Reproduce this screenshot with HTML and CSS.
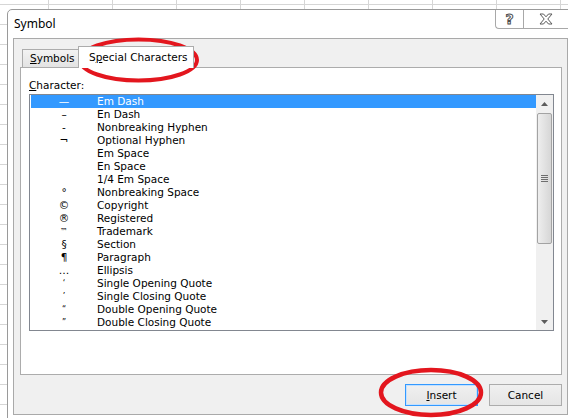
FILE: index.html
```html
<!DOCTYPE html>
<html>
<head>
<meta charset="utf-8">
<title>Symbol</title>
<link rel="stylesheet" href="styles.css">
</head>
<body>
<div class="window">
  <div class="titlebar">
    <div class="title">Symbol</div>
    <div class="caption-btns">
      <div class="cbtn help"><span class="q">?</span></div>
      <div class="cbtn close">
        <svg width="14" height="12" viewBox="0 0 14 12"><polygon points="1,1 4.5,1 7,3.8 9.5,1 13,1 8.8,6 13,11 9.5,11 7,8.2 4.5,11 1,11 5.2,6" fill="#fff" stroke="#5a5a5a" stroke-width="1" stroke-linejoin="round"/></svg>
      </div>
    </div>
  </div>
  <div class="client">
    <div class="tabs">
      <div class="tab"><u>S</u>ymbols</div>
      <div class="tab active">S<u>p</u>ecial Characters</div>
    </div>
    <div class="panel">
      <div class="label"><u>C</u>haracter:</div>
      <div class="listbox">
        <div class="rows">
          <div class="row sel"><span class="sym">—</span><span class="name">Em Dash</span></div>
          <div class="row"><span class="sym">–</span><span class="name">En Dash</span></div>
          <div class="row"><span class="sym">-</span><span class="name">Nonbreaking Hyphen</span></div>
          <div class="row"><span class="sym">¬</span><span class="name">Optional Hyphen</span></div>
          <div class="row"><span class="sym"></span><span class="name">Em Space</span></div>
          <div class="row"><span class="sym"></span><span class="name">En Space</span></div>
          <div class="row"><span class="sym"></span><span class="name">1/4 Em Space</span></div>
          <div class="row"><span class="sym">°</span><span class="name">Nonbreaking Space</span></div>
          <div class="row"><span class="sym">©</span><span class="name">Copyright</span></div>
          <div class="row"><span class="sym">®</span><span class="name">Registered</span></div>
          <div class="row"><span class="sym small">™</span><span class="name">Trademark</span></div>
          <div class="row"><span class="sym">§</span><span class="name">Section</span></div>
          <div class="row"><span class="sym">¶</span><span class="name">Paragraph</span></div>
          <div class="row"><span class="sym">…</span><span class="name">Ellipsis</span></div>
          <div class="row"><span class="sym small">‘</span><span class="name">Single Opening Quote</span></div>
          <div class="row"><span class="sym small">’</span><span class="name">Single Closing Quote</span></div>
          <div class="row"><span class="sym small">“</span><span class="name">Double Opening Quote</span></div>
          <div class="row"><span class="sym small">”</span><span class="name">Double Closing Quote</span></div>
        </div>
        <div class="scrollbar">
          <div class="sbtn"><svg width="7" height="4" viewBox="0 0 7 4"><polygon points="3.5,0 7,4 0,4" fill="#5c5c5c"/></svg></div>
          <div class="track"><div class="thumb"><div class="grip"></div></div></div>
          <div class="sbtn"><svg width="7" height="4" viewBox="0 0 7 4"><polygon points="0,0 7,0 3.5,4" fill="#5c5c5c"/></svg></div>
        </div>
      </div>
    </div>
    <div class="buttons">
      <div class="btn default"><u>I</u>nsert</div>
      <div class="btn">Cancel</div>
    </div>
  </div>
</div>
<svg class="annot" width="568" height="418" viewBox="0 0 568 418">
  <ellipse cx="138.5" cy="60" rx="58.5" ry="20.5" fill="none" stroke="#e3161e" stroke-width="4"/>
  <ellipse cx="431" cy="392.5" rx="50" ry="22.5" fill="none" stroke="#e3161e" stroke-width="4.5"/>
</svg>
</body>
</html>
```
FILE: styles.css
```css
html, body {
  margin: 0;
}
body {
  position: relative;
  width: 568px;
  height: 418px;
  box-sizing: border-box;
  padding: 9px 0 0 7px;
  overflow: hidden;
  background-color: #fff;
  background-image:
    linear-gradient(to right, #d6d6d6 1px, transparent 1px),
    linear-gradient(to bottom, #d6d6d6 1px, transparent 1px);
  background-size: 64px 20px;
  background-position: 48px 4px;
  font-family: "DejaVu Sans", sans-serif;
  font-size: 10.5px;
  color: #000;
}
.window {
  width: 567px;
  height: 421px;
  box-sizing: border-box;
  border: 1px solid #9a9a9a;
  border-radius: 5px 5px 0 0;
  background: #fff;
  padding: 0 5px 5px 5px;
  display: flex;
  flex-direction: column;
}
.titlebar {
  height: 28px;
  flex: none;
  display: flex;
  justify-content: space-between;
  align-items: flex-start;
}
.title {
  font-family: "Noto Sans", sans-serif;
  font-size: 12px;
  line-height: 27px;
  padding-left: 1px;
}
.caption-btns {
  display: flex;
}
.cbtn {
  height: 19px;
  box-sizing: border-box;
  border-left: 1px solid #a8a8a8;
  border-bottom: 1px solid #a8a8a8;
  display: flex;
  align-items: center;
  justify-content: center;
}
.help {
  width: 28px;
  border-bottom-left-radius: 4px;
}
.close {
  width: 45px;
}
.q {
  font-family: "DejaVu Sans", sans-serif;
  font-weight: bold;
  font-size: 14px;
  line-height: 14px;
  color: #fff;
  -webkit-text-stroke: 1px #4e4e4e;
}
.client {
  flex: none;
  height: 377px;
  box-sizing: border-box;
  border: 1px solid #a9a9a9;
  background: #f0f0f0;
}
.tabs {
  display: flex;
  align-items: flex-end;
  height: 21px;
  margin-top: 7px;
  padding-left: 8px;
}
.tab {
  height: 18px;
  width: 56px;
  box-sizing: border-box;
  border: 1px solid #acacac;
  border-bottom: none;
  border-right: none;
  background: linear-gradient(#f3f3f3, #e3e3e3);
  line-height: 17px;
  padding-left: 7px;
  white-space: nowrap;
}
.tab.active {
  height: 22px;
  width: 116px;
  margin-bottom: -1px;
  position: relative;
  z-index: 1;
  background: #fff;
  border-right: 1px solid #acacac;
  line-height: 21px;
  padding-left: 10px;
}
.panel {
  margin-left: 6px;
  width: 542px;
  height: 308px;
  box-sizing: border-box;
  border: 1px solid #acacac;
  background: #fff;
  padding: 11px 0 0 8px;
}
.label {
  height: 13px;
  line-height: 13px;
}
.listbox {
  margin-top: 2px;
  width: 525px;
  height: 237px;
  box-sizing: border-box;
  border: 1px solid #828790;
  display: flex;
}
.rows {
  flex: 1;
  padding-left: 1px;
}
.row {
  height: 13px;
  line-height: 13px;
  display: flex;
  white-space: nowrap;
}
.row.sel {
  background: #3399ff;
  color: #fff;
}
.sym {
  width: 66px;
  flex: none;
  text-align: center;
}
.sym.small {
  font-size: 8px;
}
.scrollbar {
  width: 17px;
  flex: none;
  background: #f0f0f0;
  display: flex;
  flex-direction: column;
}
.sbtn {
  height: 17px;
  flex: none;
  display: flex;
  align-items: center;
  justify-content: center;
}
.track {
  flex: 1;
  padding-top: 1px;
}
.thumb {
  margin: 0 1px;
  height: 131px;
  box-sizing: border-box;
  border: 1px solid #a3a3a3;
  border-radius: 2px;
  background: linear-gradient(to right, #eeeeee, #d6d6d6);
  display: flex;
  align-items: center;
  justify-content: center;
}
.grip {
  width: 7px;
  height: 7px;
  background: repeating-linear-gradient(#6e6e6e 0 1px, transparent 1px 2px);
}
.buttons {
  margin: 9px 0 0 6px;
  width: 542px;
  display: flex;
  justify-content: flex-end;
  gap: 11px;
}
.btn {
  width: 73px;
  height: 22px;
  box-sizing: border-box;
  border: 1px solid #acacac;
  background: linear-gradient(#f0f0f0, #e5e5e5);
  text-align: center;
  line-height: 20px;
}
.btn.default {
  border-color: #3399ff;
  box-shadow: inset 0 0 0 1px #c4e1ff;
}
.annot {
  position: absolute;
  left: 0;
  top: 0;
  pointer-events: none;
}
```
